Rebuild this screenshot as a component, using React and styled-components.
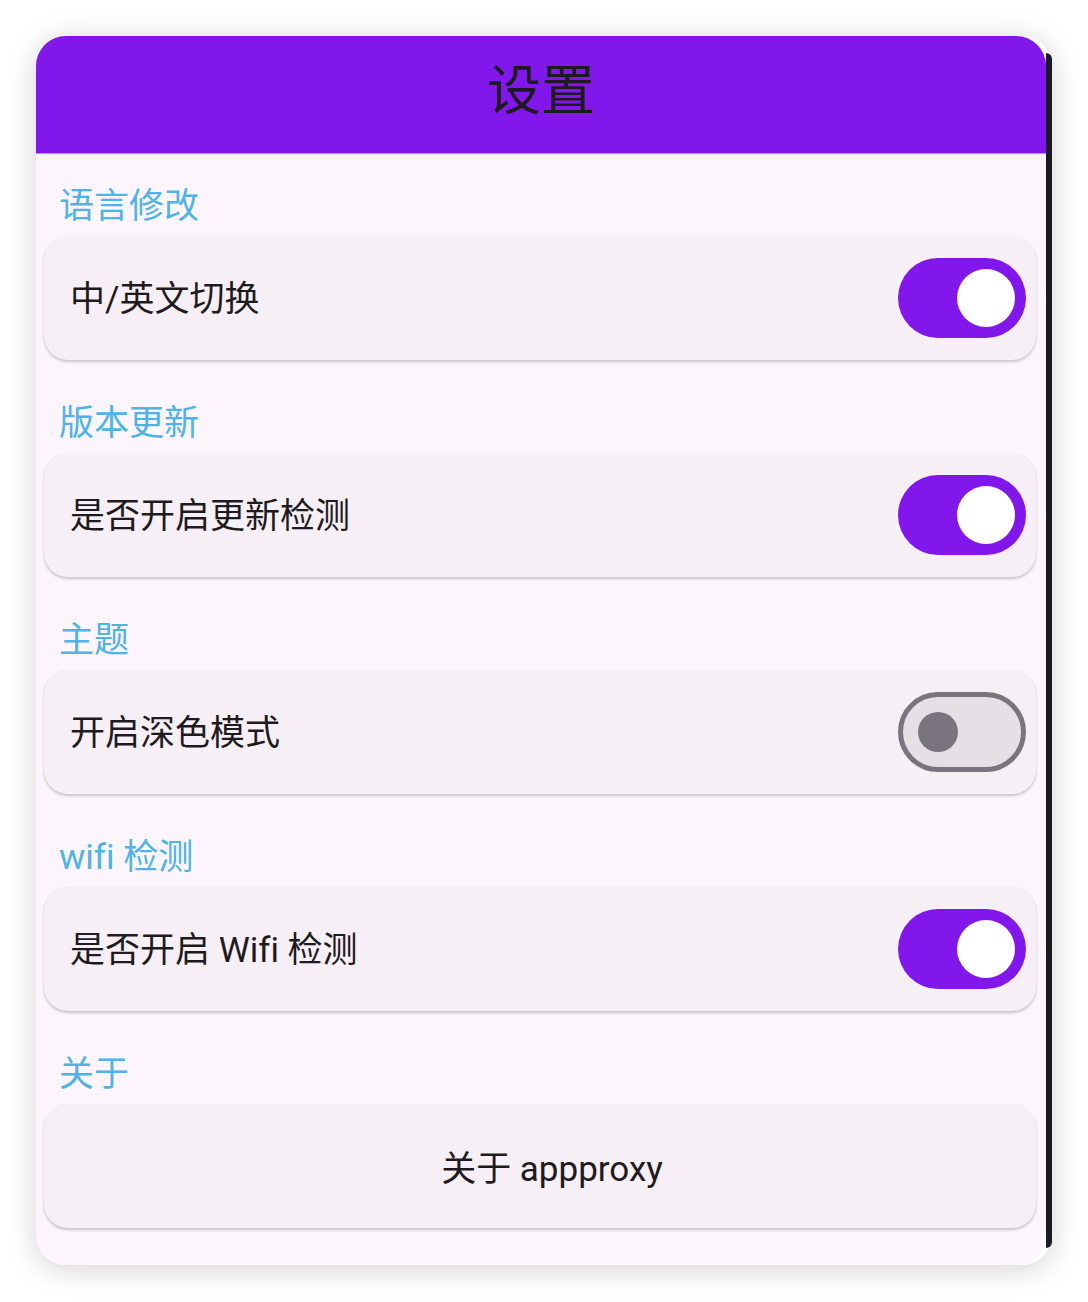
import React, { useState } from 'react'
import styled, { createGlobalStyle } from 'styled-components'

const GlobalStyle = createGlobalStyle`
  html, body {
    margin: 0;
    padding: 0;
    background: #ffffff;
  }
  body {
    font-family: Roboto, "Noto Sans CJK SC", sans-serif;
    font-variant-ligatures: none;
  }
`

const sections = [
  { label: '语言修改', title: '中/英文切换', key: 'lang', on: true },
  { label: '版本更新', title: '是否开启更新检测', key: 'update', on: true },
  { label: '主题', title: '开启深色模式', key: 'dark', on: false },
  { label: 'wifi 检测', title: '是否开启 Wifi 检测', key: 'wifi', on: true },
]

function Toggle({ on, onClick }) {
  return (
    <Track $on={on} onClick={onClick}>
      <Knob $on={on} />
    </Track>
  )
}

function App() {
  const [state, setState] = useState(
    Object.fromEntries(sections.map(s => [s.key, s.on]))
  )

  return (
    <>
      <GlobalStyle />
      <Page>
        <Frame>
          <Screen>
            <Header>
              <Title>设置</Title>
            </Header>
            <Content>
              {sections.map(s => (
                <Section key={s.key}>
                  <Label>{s.label}</Label>
                  <Card>
                    <CardText>{s.title}</CardText>
                    <Toggle
                      on={state[s.key]}
                      onClick={() => setState({ ...state, [s.key]: !state[s.key] })}
                    />
                  </Card>
                </Section>
              ))}
              <Section>
                <Label>关于</Label>
                <Card $center>
                  <CardText>关于 appproxy</CardText>
                </Card>
              </Section>
            </Content>
          </Screen>
          <Edge />
        </Frame>
      </Page>
    </>
  )
}

export default App

const Page = styled.div`
  padding: 36px;
  width: 1088px;
  box-sizing: border-box;
`

const Frame = styled.div`
  width: 1016px;
  height: 1229px;
  display: flex;
  border-radius: 30px;
  box-shadow: 0 4px 30px rgba(0, 0, 0, 0.18);
`

const Screen = styled.div`
  width: 1010px;
  height: 100%;
  border-radius: 30px;
  overflow: hidden;
  background: #fcf5fb;
  display: flex;
  flex-direction: column;
`

const Edge = styled.div`
  width: 6px;
  margin: 17px 0;
  background: #1a1b22;
  border-radius: 0 8px 8px 0;
`

const Header = styled.div`
  height: 117px;
  flex-shrink: 0;
  background: #8217eb;
  display: flex;
  align-items: center;
  justify-content: center;
  box-shadow: 0 1px 1px rgba(60, 0, 110, 0.35);
`

const Title = styled.h1`
  margin: 0 0 6px 0;
  font-size: 54px;
  font-weight: 400;
  color: #1d1b20;
  line-height: 1;
`

const Content = styled.div`
  padding: 31px 10px 0 8px;
  display: flex;
  flex-direction: column;
  gap: 41px;
`

const Section = styled.div`
  display: flex;
  flex-direction: column;
  gap: 9px;
`

const Label = styled.div`
  padding: 3px 0 0 15px;
  font-size: 35px;
  line-height: 40px;
  color: #4fb3e5;
`

const Card = styled.div`
  height: 124px;
  box-sizing: border-box;
  border-radius: 24px;
  background: #f7eff6;
  box-shadow: 0 2px 3px rgba(0, 0, 0, 0.2), 0 0 1px rgba(0, 0, 0, 0.06);
  display: flex;
  align-items: center;
  justify-content: ${p => (p.$center ? 'center' : 'space-between')};
  padding: ${p => (p.$center ? '4px 0 0 24px' : '0 10px 0 26px')};
`

const CardText = styled.div`
  font-size: 35px;
  color: #1d1b20;
  line-height: 40px;
  padding-top: 4px;
`

const Track = styled.div`
  position: relative;
  width: 128px;
  height: 80px;
  box-sizing: border-box;
  border-radius: 40px;
  background: ${p => (p.$on ? '#8217eb' : '#e6dfe6')};
  border: ${p => (p.$on ? 'none' : '5px solid #79747e')};
  cursor: pointer;
`

const Knob = styled.div`
  position: absolute;
  top: 50%;
  transform: translateY(-50%);
  border-radius: 50%;
  width: ${p => (p.$on ? '58px' : '40px')};
  height: ${p => (p.$on ? '58px' : '40px')};
  background: ${p => (p.$on ? '#ffffff' : '#79747e')};
  ${p => (p.$on ? 'right: 11px;' : 'left: 15px;')}
`
